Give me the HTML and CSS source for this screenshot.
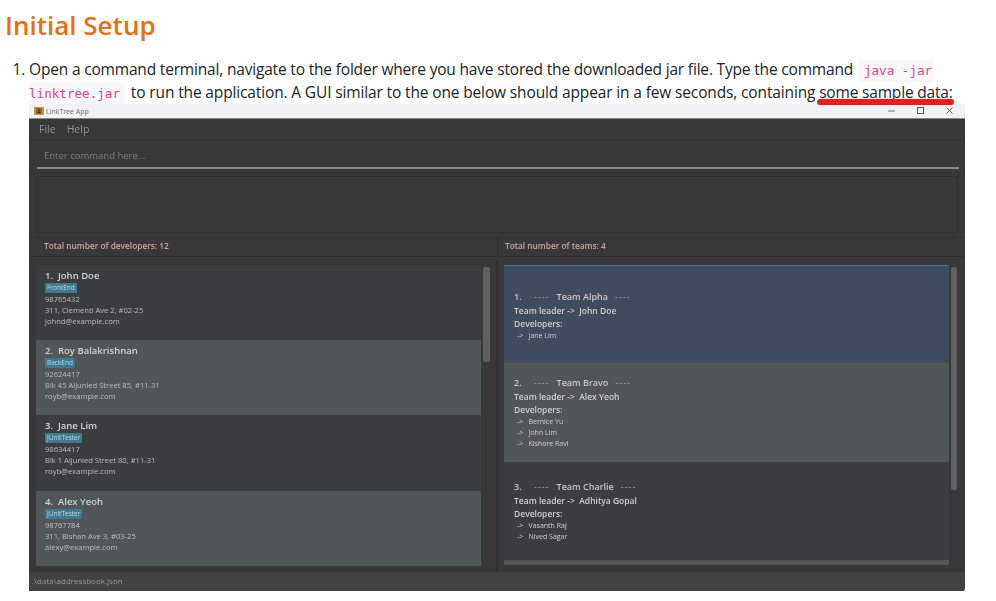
FILE: index.html
```html
<!DOCTYPE html>
<html lang="en">
<head>
    <meta charset="UTF-8">
    <meta name="viewport" content="width=device-width, initial-scale=1.0">
    <title>Initial Setup</title>
    <link rel="stylesheet" href="styles.css">
</head>
<body>
    <h2 class="page-title">Initial Setup</h2>
    <ol class="steps">
        <li>Open a command terminal, navigate to the folder where you have stored the downloaded jar file. Type the command <code class="code-start">java -jar</code> <code class="code-end">linktree.jar</code> <span class="wider">to run the application. A GUI similar to the one below should appear in a few seconds, containing</span> <span class="marked">some sample data:</span></li>
    </ol>

    <div class="window">
        <div class="titlebar">
            <svg class="app-icon" width="10" height="8" viewBox="0 0 10 8">
                <rect width="10" height="8" fill="#c9963f"/>
                <rect x="2" y="1" width="6" height="6" fill="#8f6a30"/>
                <path d="M5 2v3M3.5 5.5h3" stroke="#3a2a12" stroke-width="1" fill="none"/>
            </svg>
            <span class="app-name">LinkTree App</span>
            <div class="window-controls">
                <svg width="10" height="10" viewBox="0 0 10 10"><path d="M1 5h7" stroke="#777" fill="none"/></svg>
                <svg width="10" height="10" viewBox="0 0 10 10"><rect x="1.5" y="1.5" width="6" height="6" stroke="#555" fill="none"/></svg>
                <svg width="10" height="10" viewBox="0 0 10 10"><path d="M1.5 1.5l6 6M7.5 1.5l-6 6" stroke="#666" fill="none"/></svg>
            </div>
        </div>

        <div class="menubar">
            <span>File</span>
            <span>Help</span>
        </div>

        <div class="command">
            <div class="command-input">Enter command here...</div>
        </div>

        <div class="result"></div>

        <div class="counts">
            <div class="count">Total number of developers: 12</div>
            <div class="count">Total number of teams: 4</div>
        </div>

        <div class="panes">
            <div class="pane pane-left">
                <div class="list">
                    <div class="person">
                        <div class="person-name">1.&nbsp; John Doe</div>
                        <span class="tag">FrontEnd</span>
                        <div>98765432</div>
                        <div>311, Clementi Ave 2, #02-25</div>
                        <div>johnd@example.com</div>
                    </div>
                    <div class="person alt">
                        <div class="person-name">2.&nbsp; Roy Balakrishnan</div>
                        <span class="tag">BackEnd</span>
                        <div>92624417</div>
                        <div>Blk 45 Aljunied Street 85, #11-31</div>
                        <div>royb@example.com</div>
                    </div>
                    <div class="person">
                        <div class="person-name">3.&nbsp; Jane Lim</div>
                        <span class="tag">JUnitTester</span>
                        <div>98634417</div>
                        <div>Blk 1 Aljunied Street 80, #11-31</div>
                        <div>royb@example.com</div>
                    </div>
                    <div class="person alt">
                        <div class="person-name">4.&nbsp; Alex Yeoh</div>
                        <span class="tag">JUnitTester</span>
                        <div>98767784</div>
                        <div>311, Bishan Ave 3, #03-25</div>
                        <div>alexy@example.com</div>
                    </div>
                </div>
                <div class="scrollbar"><div class="thumb thumb-left"></div></div>
            </div>

            <div class="pane pane-right">
                <div class="list">
                    <div class="team selected">
                        <div class="team-name"><span class="team-num">1.</span><span class="dash">----</span>Team Alpha<span class="dash dash-end">----</span></div>
                        <div class="team-line">Team leader -&gt;&nbsp; John Doe</div>
                        <div class="team-line">Developers:</div>
                        <div class="member"><span class="arrow">-&gt;</span>Jane Lim</div>
                    </div>
                    <div class="team alt">
                        <div class="team-name"><span class="team-num">2.</span><span class="dash">----</span>Team Bravo<span class="dash dash-end">----</span></div>
                        <div class="team-line">Team leader -&gt;&nbsp; Alex Yeoh</div>
                        <div class="team-line">Developers:</div>
                        <div class="member"><span class="arrow">-&gt;</span>Bernice Yu</div>
                        <div class="member"><span class="arrow">-&gt;</span>John Lim</div>
                        <div class="member"><span class="arrow">-&gt;</span>Kishore Ravi</div>
                    </div>
                    <div class="team">
                        <div class="team-name"><span class="team-num">3.</span><span class="dash">----</span>Team Charlie<span class="dash dash-end">----</span></div>
                        <div class="team-line">Team leader -&gt;&nbsp; Adhitya Gopal</div>
                        <div class="team-line">Developers:</div>
                        <div class="member"><span class="arrow">-&gt;</span>Vasanth Raj</div>
                        <div class="member"><span class="arrow">-&gt;</span>Nived Sagar</div>
                    </div>
                    <div class="team-sliver"></div>
                </div>
                <div class="scrollbar"><div class="thumb thumb-right"></div></div>
            </div>
        </div>

        <div class="status">.\data\addressbook.json</div>
    </div>
</body>
</html>
```

FILE: styles.css
```css
body {
    margin: 0;
    background-color: #fff;
    font-family: "Open Sans", "Noto Sans", sans-serif;
    color: #212529;
    overflow: hidden;
}

.page-title {
    margin: 0;
    padding: 7px 0 0 5px;
    height: 50px;
    box-sizing: border-box;
    font-size: 26px;
    line-height: 36px;
    font-weight: 600;
    color: #e8700f;
}

.steps {
    margin: 0;
    padding: 8px 36px 0 29px;
    height: 54px;
    box-sizing: border-box;
    font-size: 15.5px;
    line-height: 23px;
    letter-spacing: -0.18px;
}
.steps code {
    font-family: "DejaVu Sans Mono", monospace;
    font-size: 12.6px;
    line-height: 1;
    letter-spacing: 0;
    color: #e83e8c;
    background-color: #f8f8f8;
    padding-top: 3px;
    padding-bottom: 4px;
}
.steps .code-start {
    padding-left: 6px;
    padding-right: 1px;
    margin-left: 1px;
}
.steps .code-end {
    padding-right: 5px;
    margin-right: 2px;
}
.wider {
    letter-spacing: -0.14px;
}
.marked {
    position: relative;
}
.marked::after {
    content: "";
    position: absolute;
    left: -2px;
    right: -1px;
    bottom: -2px;
    height: 6px;
    border-radius: 3px;
    background-color: #ec1c1c;
    z-index: 2;
}

.window {
    margin: 0 0 0 29px;
    width: 936px;
    height: 487px;
    display: flex;
    flex-direction: column;
    background-color: #383838;
    color: #bdbdbd;
    font-size: 7.6px;
    line-height: 11px;
    border-bottom-right-radius: 3px;
    filter: blur(0.3px);
}

.titlebar {
    height: 15px;
    flex: none;
    box-sizing: border-box;
    display: flex;
    align-items: center;
    padding-left: 5px;
    background-color: #f2f1f6;
    border-bottom: 1px solid #8a8a8a;
    font-size: 7px;
    color: #666;
}
.app-name {
    margin-left: 2px;
}
.window-controls {
    margin-left: auto;
    display: flex;
    gap: 19px;
    padding-right: 10px;
}

.menubar {
    height: 21px;
    flex: none;
    box-sizing: border-box;
    display: flex;
    align-items: center;
    gap: 11px;
    padding-left: 10px;
    border-bottom: 1px solid #333;
    font-size: 10.5px;
    color: #929292;
}

.command {
    height: 34px;
    flex: none;
    box-sizing: border-box;
    padding: 0 6px 0 8px;
    border-bottom: 1px solid #333;
}
.command-input {
    height: 29px;
    box-sizing: border-box;
    padding: 10px 0 0 7px;
    border-bottom: 2px solid #8a8a8a;
    font-size: 9.5px;
    color: #7d7d7d;
}

.result {
    height: 57px;
    flex: none;
    box-sizing: border-box;
    margin: 2px 7px 0;
    border: 1px solid #303030;
}

.counts {
    height: 20px;
    flex: none;
    margin-top: 4px;
    display: grid;
    grid-template-columns: 469px 1fr;
    border-top: 1px solid #303030;
    border-bottom: 1px solid #303030;
    box-sizing: border-box;
}
.count {
    padding: 2px 0 0 15px;
    font-size: 8.3px;
    font-weight: 600;
    color: #d0a4a4;
}
.count:first-child {
    border-right: 1px solid #303030;
}
.count + .count {
    padding-left: 7px;
}

.panes {
    flex: 1;
    min-height: 0;
    display: grid;
    grid-template-columns: 469px 1fr;
    padding-top: 3px;
}
.pane {
    display: flex;
    gap: 2px;
    height: 312px;
    box-sizing: border-box;
    padding-top: 5px;
}
.pane-left {
    padding-left: 7px;
    border-right: 2px solid #303030;
}
.pane-right {
    padding-left: 6px;
}

.list {
    width: 445px;
    flex: none;
}

.person {
    height: 75.2px;
    box-sizing: border-box;
    padding: 3px 0 0 9px;
    background-color: #3c3d3f;
}
.person.alt {
    background-color: #515658;
}
.person-name {
    font-size: 9.5px;
    font-weight: 600;
    line-height: 15px;
    color: #d2d2d2;
}
.tag {
    display: inline-block;
    padding: 0 2px;
    height: 10px;
    line-height: 10px;
    font-size: 6.5px;
    background-color: #3e7b91;
    color: #c4d7de;
    border-radius: 1px;
    vertical-align: top;
    margin-bottom: 1px;
}

.team {
    height: 98.3px;
    box-sizing: border-box;
    display: flex;
    flex-direction: column;
    justify-content: center;
    padding: 1px 0 0 10px;
    background-color: #3c3d3f;
    color: #d0d0d0;
}
.team.alt {
    background-color: #515658;
}
.team.selected {
    background-color: #3f4c5f;
    border-top: 1px solid #3e7b91;
}
.team-sliver {
    height: 5px;
    background-color: #515658;
}
.team-name {
    font-size: 9px;
    line-height: 14px;
    font-weight: 600;
    color: #c8c8c8;
}
.team-num {
    display: inline-block;
    width: 20px;
}
.dash {
    font-weight: 400;
    letter-spacing: 1px;
    margin-right: 7px;
    color: #a8a8a8;
}
.dash-end {
    margin-right: 0;
    margin-left: 7px;
}
.team-line {
    font-size: 8.5px;
    font-weight: 600;
    line-height: 13px;
}
.member {
    font-size: 7px;
    line-height: 11px;
    padding-left: 3px;
}
.arrow {
    display: inline-block;
    width: 11.5px;
}

.scrollbar {
    width: 7px;
    flex: none;
    padding-top: 2px;
}
.thumb {
    background-color: #606060;
    border-radius: 2px;
}
.thumb-left {
    height: 95px;
}
.thumb-right {
    width: 6px;
    height: 223px;
}

.status {
    height: 19px;
    flex: none;
    box-sizing: border-box;
    margin-top: auto;
    padding: 3px 0 0 3px;
    background-color: #424242;
    font-size: 8px;
    color: #969696;
    border-bottom-right-radius: 3px;
}
```
